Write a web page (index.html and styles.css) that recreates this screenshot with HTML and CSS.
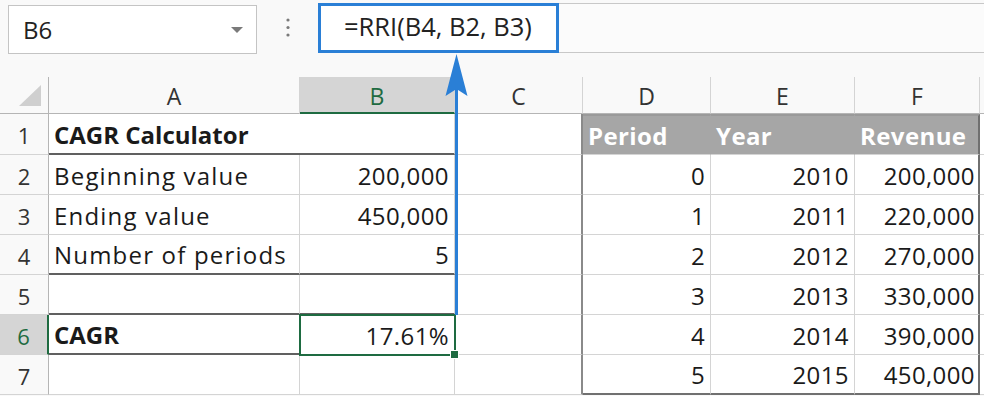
FILE: index.html
```html
<html>
<head>
  <title>CAGR Calculator</title>
  <meta name="viewport" content="width=device-width, initial-scale=1.0">
  <link rel="stylesheet" href="styles.css">
</head>
<body>
  <div class="toolbar">
    <div class="namebox">
      <span>B6</span>
      <span class="caret"></span>
    </div>
    <div class="dots">
      <svg width="6" height="24" viewBox="0 0 6 24"><circle cx="3" cy="4" r="1.6"/><circle cx="3" cy="11.5" r="1.6"/><circle cx="3" cy="19" r="1.6"/></svg>
    </div>
    <div class="formula-bar">
      <div class="formula">=RRI(B4, B2, B3)</div>
    </div>
  </div>

  <div class="sheet">
    <!-- column headers -->
    <div class="colhead corner"><span class="tri"></span></div>
    <div class="colhead">A</div>
    <div class="colhead active">B</div>
    <div class="colhead">C</div>
    <div class="colhead">D</div>
    <div class="colhead">E</div>
    <div class="colhead">F</div>
    <div class="colhead last"></div>

    <!-- row 1 -->
    <div class="rowhead">1</div>
    <div class="cell title">CAGR Calculator</div>
    <div class="cell c-col"></div>
    <div class="cell th">Period</div>
    <div class="cell th">Year</div>
    <div class="cell th f-col">Revenue</div>
    <div class="cell g-col"></div>

    <!-- row 2 -->
    <div class="rowhead">2</div>
    <div class="cell">Beginning value</div>
    <div class="cell num">200,000</div>
    <div class="cell c-col"></div>
    <div class="cell num">0</div>
    <div class="cell num">2010</div>
    <div class="cell num f-col">200,000</div>
    <div class="cell g-col"></div>

    <!-- row 3 -->
    <div class="rowhead">3</div>
    <div class="cell">Ending value</div>
    <div class="cell num">450,000</div>
    <div class="cell c-col"></div>
    <div class="cell num">1</div>
    <div class="cell num">2011</div>
    <div class="cell num f-col">220,000</div>
    <div class="cell g-col"></div>

    <!-- row 4 -->
    <div class="rowhead">4</div>
    <div class="cell rule">Number of periods</div>
    <div class="cell num rule">5</div>
    <div class="cell c-col"></div>
    <div class="cell num">2</div>
    <div class="cell num">2012</div>
    <div class="cell num f-col">270,000</div>
    <div class="cell g-col"></div>

    <!-- row 5 -->
    <div class="rowhead">5</div>
    <div class="cell rule"></div>
    <div class="cell rule"></div>
    <div class="cell c-col"></div>
    <div class="cell num">3</div>
    <div class="cell num">2013</div>
    <div class="cell num f-col">330,000</div>
    <div class="cell g-col"></div>

    <!-- row 6 -->
    <div class="rowhead active">6</div>
    <div class="cell bold rule">CAGR</div>
    <div class="cell num selected">17.61%</div>
    <div class="cell c-col"></div>
    <div class="cell num">4</div>
    <div class="cell num">2014</div>
    <div class="cell num f-col">390,000</div>
    <div class="cell g-col"></div>

    <!-- row 7 -->
    <div class="rowhead">7</div>
    <div class="cell"></div>
    <div class="cell"></div>
    <div class="cell c-col"></div>
    <div class="cell num bottom">5</div>
    <div class="cell num bottom">2015</div>
    <div class="cell num f-col bottom">450,000</div>
    <div class="cell g-col"></div>
  </div>

  <svg class="arrow" width="26" height="264" viewBox="0 0 26 264">
    <line x1="12.5" y1="34" x2="12.5" y2="262" stroke="#2a7fd6" stroke-width="3"/>
    <path d="M12.5 1 L23.5 43 L12.5 36 L1.5 43 Z" fill="#2a7fd6"/>
  </svg>
</body>
</html>
```

FILE: styles.css
```css
body {
  margin: 0;
  width: 984px;
  height: 396px;
  overflow: hidden;
  background-color: #f9f9f9;
  font-family: 'Open Sans', 'Liberation Sans', sans-serif;
  color: #1a1a1a;
  position: relative;
}
.toolbar {
  display: flex;
  align-items: flex-start;
  height: 77px;
}
.namebox {
  margin: 5px 0 0 8px;
  width: 249px;
  height: 49px;
  box-sizing: border-box;
  border: 1px solid #c4c4c4;
  background-color: #ffffff;
  display: flex;
  align-items: center;
  justify-content: space-between;
  padding: 0 13px 0 14px;
  font-size: 24px;
  color: #222;
}
.caret {
  width: 0;
  height: 0;
  border-left: 6px solid transparent;
  border-right: 6px solid transparent;
  border-top: 6px solid #7a7a7a;
}
.dots {
  width: 62px;
  display: flex;
  justify-content: center;
  padding-top: 16px;
  fill: #7a7a7a;
}
.formula-bar {
  flex: 1;
  margin-top: 3px;
  height: 50px;
  box-sizing: border-box;
  border-top: 1px solid #c8c8c8;
  border-bottom: 1px solid #c8c8c8;
  background-color: #fbfbfb;
  position: relative;
}
.formula {
  position: absolute;
  left: -1px;
  top: -1px;
  width: 241px;
  height: 50px;
  box-sizing: border-box;
  border: 3px solid #2a7fd6;
  background-color: #ffffff;
  font-size: 25.5px;
  padding-left: 23px;
  line-height: 41px;
  color: #222;
}

.sheet {
  display: grid;
  grid-template-columns: 49px 251px 155px 128px 128px 144px 125px 1fr;
  grid-template-rows: 37px 41px repeat(6, 40px);
}
.colhead {
  border-right: 1px solid #d4d4d4;
  border-bottom: 1px solid #b5b5b5;
  display: flex;
  align-items: center;
  justify-content: center;
  font-size: 23px;
  color: #333;
  padding-top: 2px;
}
.colhead.last {
  border-right: none;
}
.colhead.corner {
  border-right: 1px solid #b5b5b5;
  position: relative;
}
.tri {
  position: absolute;
  right: 7px;
  bottom: 7px;
  width: 0;
  height: 0;
  border-left: 22px solid transparent;
  border-bottom: 21px solid #cfcfcf;
}
.colhead.active {
  background-color: #d5d5d5;
  color: #1e6b41;
  border-bottom: 2px solid #1e6b41;
}
.rowhead {
  border-right: 1px solid #b5b5b5;
  border-bottom: 1px solid #d4d4d4;
  display: flex;
  align-items: center;
  justify-content: center;
  font-size: 22px;
  color: #333;
  padding-top: 2px;
}
.rowhead.active {
  background-color: #d5d5d5;
  color: #1e6b41;
  border-right: 2px solid #1e6b41;
}
.cell {
  background-color: #ffffff;
  border-right: 1px solid #d4d4d4;
  border-bottom: 1px solid #d4d4d4;
  display: flex;
  align-items: flex-end;
  padding: 0 5px 6px 5px;
  font-size: 24px;
  letter-spacing: 1.2px;
  line-height: 1;
  white-space: nowrap;
  min-width: 0;
}
.cell.num {
  justify-content: flex-end;
  letter-spacing: 0.4px;
}
.cell.title {
  grid-column: span 2;
  font-weight: bold;
  letter-spacing: 0;
  border-bottom: 2px solid #606060;
}
.cell.bold {
  font-weight: bold;
  letter-spacing: 0;
}
.cell.rule {
  border-bottom: 2px solid #606060;
}
.cell.c-col {
  border-right: 2px solid #8a8a8a;
}
.cell.f-col {
  border-right: 2px solid #707070;
  padding-right: 3px;
}
.cell.g-col {
  border-right: none;
}
.cell.bottom {
  border-bottom: 2px solid #707070;
}
.cell.th {
  background-color: #a6a6a6;
  border-right-color: #a6a6a6;
  border-top: 2px solid #9a9a9a;
  color: #ffffff;
  font-weight: bold;
  letter-spacing: 0.4px;
  justify-content: flex-start;
}
.cell.th.f-col {
  border-right: 2px solid #707070;
}
.cell.selected {
  position: relative;
  outline: 2px solid #1e6b41;
  outline-offset: -1px;
}
.cell.selected::after {
  content: "";
  position: absolute;
  right: -5px;
  bottom: -5px;
  width: 7px;
  height: 7px;
  background-color: #1e6b41;
  border: 1px solid #ffffff;
}
.arrow {
  position: absolute;
  left: 444px;
  top: 53px;
}
```
